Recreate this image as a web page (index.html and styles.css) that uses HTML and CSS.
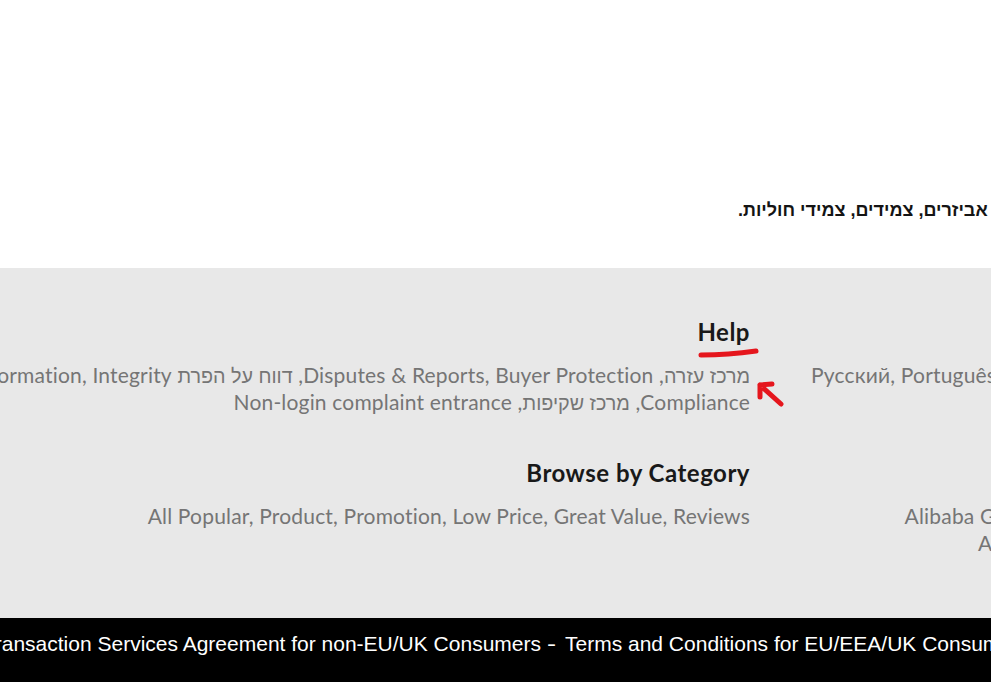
FILE: index.html
```html
<!DOCTYPE html>
<html lang="he" dir="rtl">
<head>
<meta charset="utf-8">
<title>AliExpress</title>
<link rel="stylesheet" href="styles.css">
</head>
<body>
<section class="top">
  <div class="top-inner">
    <p class="desc">שרשראות, עגילים וטבעות, מגוון אביזרים, צמידים, צמידי חוליות.</p>
  </div>
</section>

<footer class="site-footer">
  <div class="footer-grid">
    <div class="cell cell-mid">
      <h3 class="f-title">Help</h3>
      <p class="f-links"><span class="he">מרכז עזרה</span>, Disputes &amp; Reports, Buyer Protection, <span class="he">דווח על הפרת</span> IPR, Regulated Information, Integrity<br>Compliance, <span class="he">מרכז שקיפות</span>, Non-login complaint entrance</p>
    </div>
    <div class="cell cell-side">
      <h3 class="f-title">Multi-Language Sites</h3>
      <p class="f-links"><span class="line">Русский, Português, Español, Français, Deutsch, Italiano</span></p>
    </div>
    <div class="cell cell-mid">
      <h3 class="f-title">Browse by Category</h3>
      <p class="f-links">All Popular, Product, Promotion, Low Price, Great Value, Reviews</p>
    </div>
    <div class="cell cell-side">
      <h3 class="f-title">Alibaba Group</h3>
      <p class="f-links"><span class="line">Alibaba Group Website, AliExpress, Alipay, UC</span><span class="line">Alibaba Cloud, Alimama, Taobao, Tmall</span></p>
    </div>
  </div>
</footer>

<div class="legal">
  <div class="legal-lead">
    <span class="legal-link">Transaction Services Agreement for non-EU/UK Consumers</span>
  </div>
  <span class="legal-sep">-</span>
  <span class="legal-link">Terms and Conditions for EU/EEA/UK Consumers</span>
</div>

<svg class="annot" width="991" height="682" viewBox="0 0 991 682" aria-hidden="true">
  <path d="M701 355 Q 728 355 756 351" fill="none" stroke="#e5161d" stroke-width="5" stroke-linecap="round"/>
  <path d="M781 404 L760 385 M760 385 L772 384 M760 385 L760 397" fill="none" stroke="#e5161d" stroke-width="5" stroke-linecap="round" stroke-linejoin="round"/>
</svg>
</body>
</html>
```
FILE: styles.css
```css
html, body {
  margin: 0;
  padding: 0;
  overflow: hidden;
}
body {
  position: relative;
  width: 991px;
  height: 682px;
  background: #ffffff;
  direction: rtl;
  font-family: Lato, "Liberation Sans", sans-serif;
}

/* top white product area */
.top {
  height: 268px;
  box-sizing: border-box;
  padding-top: 198px;
}
.top-inner {
  display: flex;
  direction: ltr;
  padding-left: 738px;
}
.desc {
  flex: none;
  margin: 0;
  direction: rtl;
  white-space: nowrap;
  font-family: "Liberation Sans", Arial, sans-serif;
  font-weight: 700;
  font-size: 18px;
  line-height: 24px;
  color: #141414;
}

/* grey footer */
.site-footer {
  background: #e8e8e8;
  height: 350px;
  box-sizing: border-box;
  padding-top: 50px;
}
.footer-grid {
  display: grid;
  direction: ltr;
  grid-template-columns: 750px max-content;
  column-gap: 61px;
  row-gap: 44px;
}
.cell {
  direction: rtl;
  text-align: right;
  min-width: 0;
}
.f-title {
  margin: 0 0 15px;
  font-family: Lato, "Liberation Sans", sans-serif;
  font-weight: 700;
  font-size: 24px;
  line-height: 28px;
  letter-spacing: 0.5px;
  color: #191919;
  white-space: nowrap;
}
.f-links {
  margin: 0;
  font-size: 21px;
  line-height: 27px;
  letter-spacing: 0.18px;
  color: #757575;
  white-space: nowrap;
}
.he {
  font-family: "Liberation Sans", Arial, sans-serif;
  font-size: 0.94em;
  line-height: 1;
  letter-spacing: 0;
}
.line {
  display: block;
}

/* black legal bar */
.legal {
  display: flex;
  direction: ltr;
  background: #000000;
  height: 64px;
  box-sizing: border-box;
  padding-top: 14px;
  font-family: "Liberation Sans", Arial, sans-serif;
  font-size: 21px;
  line-height: 24px;
  color: #ffffff;
  white-space: nowrap;
}
.legal-lead {
  flex: 0 0 541px;
  min-width: 0;
  display: flex;
  justify-content: flex-end;
}
.legal-sep {
  margin-left: 7px;
  transform: scaleX(1.3);
}
.legal-sep + .legal-link {
  margin-left: 10px;
}

/* hand-drawn red annotation overlay */
.annot {
  position: absolute;
  left: 0;
  top: 0;
  pointer-events: none;
}
```
